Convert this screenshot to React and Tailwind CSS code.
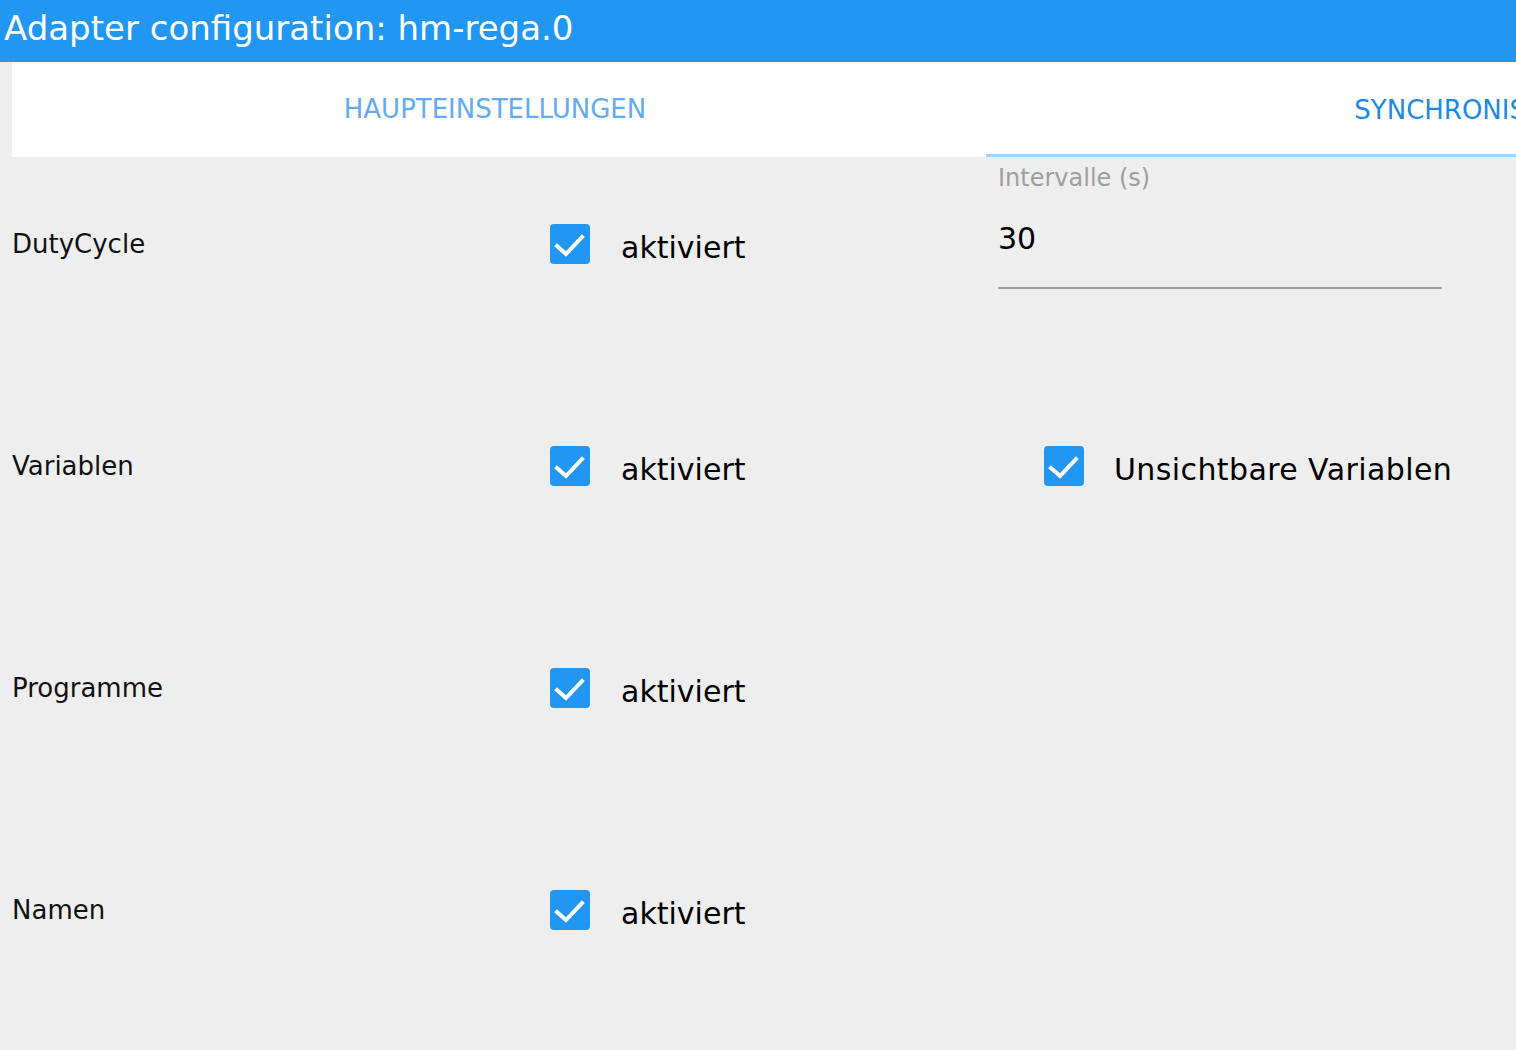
import React from "react";

const font = { fontFamily: '"DejaVu Sans", "Liberation Sans", sans-serif' };

function Check() {
  return (
    <div className="w-[40px] h-[40px] rounded-[4px] bg-[#2196f3] flex items-center justify-center shrink-0">
      <svg width="40" height="40" viewBox="0 0 40 40">
        <path d="M7 22 L16 30 L32 13" fill="none" stroke="#fff" strokeWidth="4" strokeLinecap="square" strokeLinejoin="miter" />
      </svg>
    </div>
  );
}

function CheckLabel({ text, wide }) {
  return (
    <div className="flex items-center">
      <Check />
      <span className={(wide ? "ml-[30px] tracking-[0.4px] " : "ml-[31px] ") + "text-[30px] leading-none text-black pt-[8px]"}>{text}</span>
    </div>
  );
}

function Row({ label, third }) {
  return (
    <div className="flex h-[222px] items-start">
      <div className="w-[550px] pl-[12px] h-[174px] flex items-center text-[26px] leading-none text-[#111]">
        {label}
      </div>
      <div className="w-[436px] h-[174px] flex items-center">
        <CheckLabel text="aktiviert" />
      </div>
      <div className="flex-1">{third}</div>
    </div>
  );
}

export default function App() {
  return (
    <div className="w-[1516px] min-h-[1050px] bg-[#eeeeee] overflow-hidden" style={font}>
      <div className="h-[62px] bg-[#2196f3] flex items-center pl-[4px]">
        <span className="text-white text-[34px] leading-none pb-[6px]">Adapter configuration: hm-rega.0</span>
      </div>
      <div className="ml-[12px] h-[95px] bg-white flex overflow-hidden">
        <div className="w-[974px] shrink-0 flex items-center justify-center text-[26px] text-[#64aaf0] leading-none pb-[2px] pr-[8px]">
          HAUPTEINSTELLUNGEN
        </div>
        <div className="w-[974px] shrink-0 flex flex-col">
          <div className="flex-1 flex items-center justify-center text-[26px] text-[#1e88e5] leading-none pt-[4px] pl-[14px]">
            SYNCHRONISATION
          </div>
          <div className="h-[3px] bg-[#a6d4fa]" />
        </div>
      </div>
      <Row
        label="DutyCycle"
        third={
          <div className="pl-[12px] pt-[7px] w-[456px]">
            <div className="text-[24px] leading-[28px] text-[#9e9e9e]">Intervalle (s)</div>
            <div className="mt-[32px] text-[30px] leading-none text-black">30</div>
            <div className="mt-[33px] h-[2px] bg-[#9e9e9e]" />
          </div>
        }
      />
      <Row
        label="Variablen"
        third={
          <div className="h-[174px] flex items-center pl-[58px]">
            <CheckLabel text="Unsichtbare Variablen" wide />
          </div>
        }
      />
      <Row label="Programme" />
      <Row label="Namen" />
    </div>
  );
}
